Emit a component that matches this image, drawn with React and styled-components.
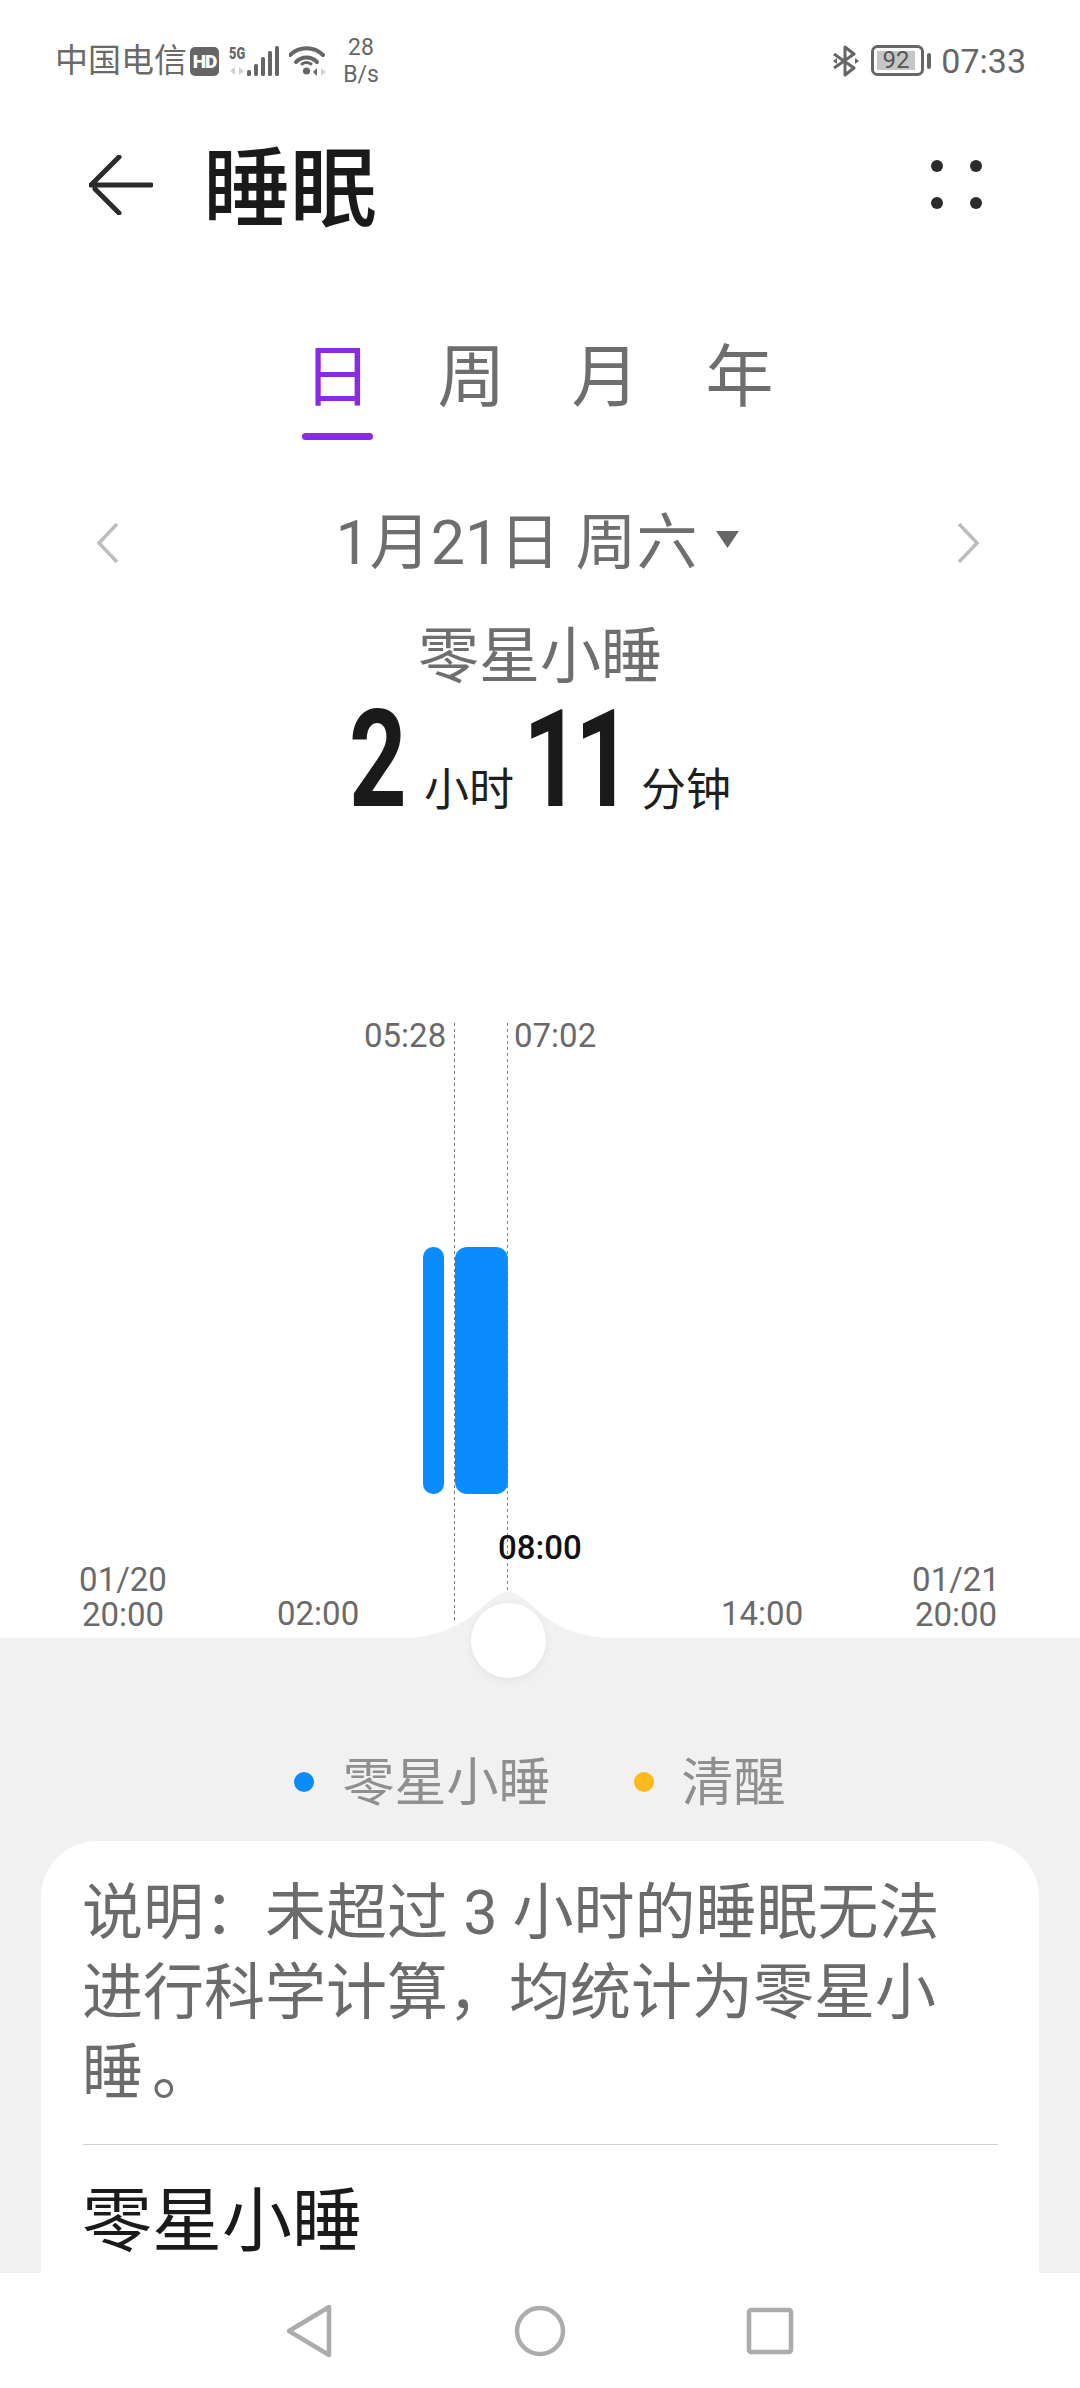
import React from "react";
import styled, { createGlobalStyle } from "styled-components";

const GlobalStyle = createGlobalStyle`
  html, body {
    margin: 0;
    padding: 0;
    background: #fff;
    font-family: Roboto, "Noto Sans CJK SC", sans-serif;
  }
`;

const Page = styled.div`
  width: 1080px;
  height: 2388px;
  display: flex;
  flex-direction: column;
  overflow: hidden;
  background: #fff;
`;

const StatusBar = styled.div`
  flex: none;
  height: 122px;
  padding: 0 54px 0 55px;
  display: flex;
  align-items: center;
  justify-content: space-between;
  color: #666;
`;

const StatusGroup = styled.div`
  display: flex;
  align-items: center;
`;

const Carrier = styled.span`
  font-size: 33px;
  line-height: 40px;
  color: #6a6a6a;
`;

const HdBadge = styled.span`
  width: 29px;
  height: 29px;
  margin-left: 3px;
  border-radius: 5px;
  background: #666;
  color: #fff;
  font-size: 19px;
  font-weight: 900;
  line-height: 29px;
  letter-spacing: -1px;
  text-align: center;
`;

const Speed = styled.span`
  margin-left: 17px;
  width: 34px;
  display: flex;
  flex-direction: column;
  align-items: center;
  font-size: 23px;
  line-height: 27px;
  color: #666;
`;

const Clock = styled.span`
  margin-left: 10px;
  font-size: 34px;
  line-height: 40px;
  color: #666;
`;

const Header = styled.div`
  flex: none;
  height: 136px;
  padding: 0 0 0 89px;
  display: flex;
  align-items: center;
`;

const ArrowSlot = styled.div`
  display: flex;
  margin-top: -11px;
`;

const Title = styled.h1`
  margin: 0 0 0 50px;
  font-size: 87px;
  line-height: 100px;
  font-weight: 500;
  color: #1a1a1a;
  flex: 1;
`;

const MoreDots = styled.div`
  width: 51px;
  margin: -12px 98px 0 0;
  display: grid;
  grid-template-columns: 12px 12px;
  justify-content: space-between;
  row-gap: 25px;
`;

const Dot = styled.span`
  width: 12px;
  height: 12px;
  border-radius: 50%;
  background: #2b2b2b;
`;

const Tabs = styled.div`
  flex: none;
  padding: 80px 3px 0 0;
  display: flex;
  justify-content: center;
`;

const Tab = styled.div`
  width: 134px;
  display: flex;
  flex-direction: column;
  align-items: center;
`;

const TabLabel = styled.span`
  font-size: 68px;
  line-height: 80px;
  color: ${(p) => (p.$active ? "#8a2be2" : "#6e6e6e")};
`;

const TabLine = styled.span`
  width: 71px;
  height: 7px;
  margin-top: 15px;
  border-radius: 4px;
  background: ${(p) => (p.$active ? "#8a2be2" : "transparent")};
`;

const DateRow = styled.div`
  flex: none;
  height: 80px;
  margin-top: 63px;
  padding: 0 101px 0 97px;
  display: flex;
  align-items: center;
  justify-content: space-between;
`;

const DateLabel = styled.div`
  display: flex;
  align-items: center;
  font-size: 61px;
  line-height: 80px;
  color: #6e6e6e;
`;

const Caret = styled.svg`
  width: 25px;
  height: 19px;
  margin: -8px 0 0 18px;
`;

const SummaryTitle = styled.div`
  flex: none;
  margin-top: 37px;
  font-size: 61px;
  line-height: 75px;
  text-align: center;
  color: #6e6e6e;
`;

const Duration = styled.div`
  flex: none;
  height: 135px;
  display: flex;
  justify-content: center;
  align-items: baseline;
  color: #1a1a1a;
`;

// the digits in the picture are condensed, squeezed from the left edge
const BigNumber = styled.span`
  display: inline-block;
  width: ${(p) => p.$width}px;
  font-size: 136px;
  line-height: 130px;
  font-weight: 700;
  letter-spacing: -8px;
  transform: scaleX(0.74);
  transform-origin: left center;
`;

const Unit = styled.span`
  font-size: 45px;
  line-height: 60px;
  margin-right: ${(p) => p.$gap}px;
  color: #1f1f1f;
`;

const Chart = styled.div`
  flex: none;
  position: relative;
  z-index: 1;
  height: 808px;
`;

/* chart items are placed by their time on the axis */
const Guide = styled.div`
  position: absolute;
  top: 193px;
  left: ${(p) => p.$left}px;
  width: 1px;
  height: ${(p) => p.$height}px;
  background: repeating-linear-gradient(to bottom, ${(p) => p.$color} 0 3px, transparent 3px 6px);
`;

const Bar = styled.div`
  position: absolute;
  top: 417px;
  height: 247px;
  left: ${(p) => p.$left}px;
  width: ${(p) => p.$width}px;
  border-radius: ${(p) => p.$radius}px;
  background: #0a8cff;
`;

const TimeLabel = styled.span`
  position: absolute;
  left: ${(p) => p.$left}px;
  top: ${(p) => p.$top}px;
  font-size: 33px;
  line-height: 36px;
  font-weight: ${(p) => (p.$strong ? 500 : 400)};
  color: ${(p) => (p.$strong ? "#111" : "#6a6a6a")};
`;

const AxisStack = styled.div`
  position: absolute;
  left: ${(p) => p.$left}px;
  top: 732px;
  width: 100px;
  display: flex;
  flex-direction: column;
  align-items: center;
  font-size: 33px;
  line-height: 35px;
  color: #6a6a6a;
`;

const Bump = styled.svg`
  position: absolute;
  left: 390px;
  top: 762px;
  width: 234px;
  height: 47px;
`;

const Knob = styled.div`
  position: absolute;
  left: 471px;
  top: 773px;
  width: 75px;
  height: 75px;
  border-radius: 50%;
  background: #fff;
  box-shadow: 0 2px 10px rgba(0, 0, 0, 0.06);
`;

const Panel = styled.div`
  flex: 1;
  min-height: 0;
  overflow: hidden;
  background: #f1f1f1;
  padding: 0 41px;
`;

const Legend = styled.div`
  margin-top: 106px;
  height: 80px;
  display: flex;
  justify-content: center;
  align-items: center;
  gap: 83px;
`;

const LegendItem = styled.div`
  display: flex;
  align-items: center;
  gap: 28px;
  font-size: 52px;
  line-height: 80px;
  color: #8f8f8f;
`;

const LegendDot = styled.span`
  width: 20px;
  height: 20px;
  margin-top: -4px;
  border-radius: 50%;
  background: ${(p) => p.$color};
`;

const Card = styled.div`
  margin-top: 17px;
  padding: 32px 41px 60px 41px;
  border-radius: 56px;
  background: #fff;
`;

const Note = styled.p`
  margin: 0 0 31px;
  max-width: 900px;
  font-size: 61px;
  line-height: 80px;
  color: #6b6b6b;
`;

const NotePeriod = styled.span`
  margin-left: 9px;
`;

const Divider = styled.div`
  height: 1px;
  margin-left: 1px;
  background: #cfcfcf;
`;

const CardHeading = styled.div`
  margin-top: 37px;
  font-size: 70px;
  line-height: 80px;
  color: #1a1a1a;
`;

const NavBar = styled.div`
  flex: none;
  height: 115px;
  display: flex;
  justify-content: center;
  align-items: center;
  gap: 170px;
  background: #fff;
`;

const NavIcon = styled.svg`
  width: 60px;
  height: 60px;
  fill: none;
  stroke: #acacac;
  stroke-width: 4.5;
  stroke-linejoin: round;
`;

function BackArrow() {
  return (
    <svg width="64" height="60" viewBox="0 0 64 60" fill="none" stroke="#2b2b2b" strokeWidth="5" strokeLinecap="round">
      <path d="M30 2 L2 30 M2 30 H62 M30 58 L6 34" />
    </svg>
  );
}

function NetworkIcon() {
  return (
    <svg width="50" height="32" viewBox="0 0 50 32" style={{ marginLeft: 10 }}>
      <g transform="scale(0.8 1)">
        <text x="0" y="14" fontSize="16" fontWeight="900" fontFamily="Roboto, sans-serif" fill="#666">5G</text>
      </g>
      <path d="M6 22 L1 26 L6 30 Z M10 22 L15 26 L10 30 Z" fill="#d2d2d2" />
      <rect x="18" y="25" width="4" height="6" rx="1.5" fill="#666" />
      <rect x="25" y="19" width="4" height="12" rx="1.5" fill="#666" />
      <rect x="32" y="12" width="4" height="19" rx="1.5" fill="#666" />
      <rect x="39" y="6" width="4" height="25" rx="1.5" fill="#666" />
      <rect x="46" y="1" width="4" height="30" rx="1.5" fill="#666" />
    </svg>
  );
}

function WifiIcon() {
  return (
    <svg width="38" height="32" viewBox="0 0 38 32" fill="none" style={{ marginLeft: 10 }}>
      <path d="M1 10 C10 1 25 1 34 10" stroke="#666" strokeWidth="4" strokeLinecap="round" />
      <path d="M7 17 C13 11 22 11 28 17" stroke="#666" strokeWidth="4" strokeLinecap="round" />
      <circle cx="17.5" cy="26" r="3.6" fill="#666" />
      <path d="M13 19 C16 17 19 17 22 19" stroke="#666" strokeWidth="3" strokeLinecap="round" />
      <path d="M28 23 L24 27 L28 31 Z" fill="#666" />
      <path d="M32 23 L37 27 L32 31 Z" fill="#d2d2d2" />
    </svg>
  );
}

function BluetoothIcon() {
  return (
    <svg width="26" height="32" viewBox="0 0 26 32" fill="none" stroke="#666" strokeWidth="3">
      <path d="M1 9 L21 23 L12 30 V2 L21 9 L1 23" strokeLinejoin="round" />
      <path d="M22 13 L26 16 L22 19 Z" fill="#666" stroke="none" />
      <path d="M4 13 L0 16 L4 19 Z" fill="#666" stroke="none" />
    </svg>
  );
}

function BatteryIcon() {
  return (
    <svg width="60" height="32" viewBox="0 0 60 32" style={{ marginLeft: 12 }}>
      <rect x="1.5" y="1.5" width="50" height="28" rx="5" fill="none" stroke="#666" strokeWidth="3" />
      <rect x="6" y="6" width="38" height="19" fill="#c6c6c6" />
      <rect x="56" y="8" width="4" height="16" rx="2" fill="#666" />
      <text x="25" y="23" fontSize="24" textAnchor="middle" fontFamily="Roboto, sans-serif" fill="#555">92</text>
    </svg>
  );
}

function Chevron({ flip }) {
  return (
    <svg width="22" height="40" viewBox="0 0 22 40" fill="none" stroke="#bdbdbd" strokeWidth="3.5">
      <path d={flip ? "M2 1 L20 20 L2 39" : "M20 1 L2 20 L20 39"} />
    </svg>
  );
}

export default function App() {
  return (
    <Page>
      <GlobalStyle />
      <StatusBar>
        <StatusGroup>
          <Carrier>中国电信</Carrier>
          <HdBadge>HD</HdBadge>
          <NetworkIcon />
          <WifiIcon />
          <Speed>
            <span>28</span>
            <span>B/s</span>
          </Speed>
        </StatusGroup>
        <StatusGroup>
          <BluetoothIcon />
          <BatteryIcon />
          <Clock>07:33</Clock>
        </StatusGroup>
      </StatusBar>

      <Header>
        <ArrowSlot>
          <BackArrow />
        </ArrowSlot>
        <Title>睡眠</Title>
        <MoreDots>
          <Dot />
          <Dot />
          <Dot />
          <Dot />
        </MoreDots>
      </Header>

      <Tabs>
        {["日", "周", "月", "年"].map((t, i) => (
          <Tab key={t}>
            <TabLabel $active={i === 0}>{t}</TabLabel>
            <TabLine $active={i === 0} />
          </Tab>
        ))}
      </Tabs>

      <DateRow>
        <Chevron />
        <DateLabel>
          1月21日 周六
          <Caret viewBox="0 0 26 20">
            <path d="M1 1 H25 L13 19 Z" fill="#666" />
          </Caret>
        </DateLabel>
        <Chevron flip />
      </DateRow>

      <SummaryTitle>零星小睡</SummaryTitle>
      <Duration>
        <BigNumber $width={75}>2</BigNumber>
        <Unit $gap={9}>小时</Unit>
        <BigNumber $width={118}>11</BigNumber>
        <Unit $gap={0}>分钟</Unit>
      </Duration>

      <Chart>
        <TimeLabel $left={364} $top={188}>05:28</TimeLabel>
        <TimeLabel $left={514} $top={188}>07:02</TimeLabel>
        <Bar $left={423} $width={21} $radius={10} />
        <Bar $left={455} $width={53} $radius={12} />
        <Guide $left={454} $height={597} $color="#777" />
        <Guide $left={507} $height={569} $color="#8a7aa8" />
        <TimeLabel $left={498} $top={700} $strong>08:00</TimeLabel>
        <AxisStack $left={73}>
          <span>01/20</span>
          <span>20:00</span>
        </AxisStack>
        <TimeLabel $left={277} $top={766}>02:00</TimeLabel>
        <TimeLabel $left={721} $top={766}>14:00</TimeLabel>
        <AxisStack $left={906}>
          <span>01/21</span>
          <span>20:00</span>
        </AxisStack>
        <Bump viewBox="0 0 234 47">
          <path d="M0 47 C42 47 68 36 88 19 C101 7 109 0 118 0 C127 0 135 7 148 19 C168 36 192 47 234 47 Z" fill="#f1f1f1" />
        </Bump>
        <Knob />
      </Chart>

      <Panel>
        <Legend>
          <LegendItem>
            <LegendDot $color="#0a8cff" />
            零星小睡
          </LegendItem>
          <LegendItem>
            <LegendDot $color="#fdb91e" />
            清醒
          </LegendItem>
        </Legend>
        <Card>
          <Note>
            说明：未超过 3 小时的睡眠无法进行科学计算，均统计为零星小睡<NotePeriod>。</NotePeriod>
          </Note>
          <Divider />
          <CardHeading>零星小睡</CardHeading>
        </Card>
      </Panel>

      <NavBar>
        <NavIcon viewBox="0 0 60 60">
          <path d="M49 6 V54 L9 30 Z" />
        </NavIcon>
        <NavIcon viewBox="0 0 60 60">
          <circle cx="30" cy="30" r="23" />
        </NavIcon>
        <NavIcon viewBox="0 0 60 60">
          <rect x="9" y="9" width="42" height="42" rx="2" />
        </NavIcon>
      </NavBar>
    </Page>
  );
}
